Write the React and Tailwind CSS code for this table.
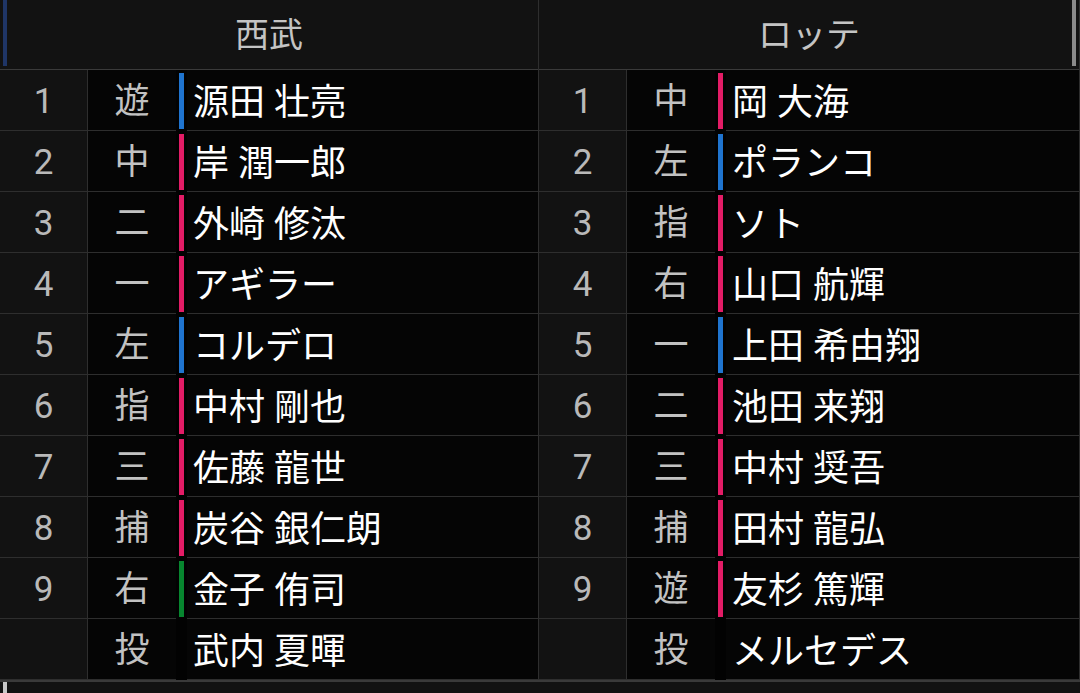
const seibu = [
  { no: "1", pos: "遊", name: "源田 壮亮", bar: "blue" },
  { no: "2", pos: "中", name: "岸 潤一郎", bar: "pink" },
  { no: "3", pos: "二", name: "外崎 修汰", bar: "pink" },
  { no: "4", pos: "一", name: "アギラー", bar: "pink" },
  { no: "5", pos: "左", name: "コルデロ", bar: "blue" },
  { no: "6", pos: "指", name: "中村 剛也", bar: "pink" },
  { no: "7", pos: "三", name: "佐藤 龍世", bar: "pink" },
  { no: "8", pos: "捕", name: "炭谷 銀仁朗", bar: "pink" },
  { no: "9", pos: "右", name: "金子 侑司", bar: "green" },
  { no: "", pos: "投", name: "武内 夏暉", bar: null },
]

const lotte = [
  { no: "1", pos: "中", name: "岡 大海", bar: "pink" },
  { no: "2", pos: "左", name: "ポランコ", bar: "blue" },
  { no: "3", pos: "指", name: "ソト", bar: "pink" },
  { no: "4", pos: "右", name: "山口 航輝", bar: "pink" },
  { no: "5", pos: "一", name: "上田 希由翔", bar: "blue" },
  { no: "6", pos: "二", name: "池田 来翔", bar: "pink" },
  { no: "7", pos: "三", name: "中村 奨吾", bar: "pink" },
  { no: "8", pos: "捕", name: "田村 龍弘", bar: "pink" },
  { no: "9", pos: "遊", name: "友杉 篤輝", bar: "pink" },
  { no: "", pos: "投", name: "メルセデス", bar: null },
]

const barColor = {
  blue: "bg-[#1f74cf]",
  pink: "bg-[#e31c66]",
  green: "bg-[#07862f]",
}

const Lineup = ({ team, players, className }) => (
  <div className={`flex flex-col border-r border-[#2e2e2e] ${className}`}>
    <div className="h-[70px] border-b border-[#3a3a3a] bg-[#121212] flex items-center justify-center pt-[2px] text-[34px] text-[#c4c4c4]">
      {team}
    </div>
    {players.map((p, i) => (
      <div key={i} className="flex h-[61px]">
        <div className="w-[88px] shrink-0 bg-[#121212] border-r border-b border-[#2e2e2e] flex items-center justify-center pt-[5px] text-[35px] text-[#b9b9b9]">
          {p.no}
        </div>
        <div className="w-[88px] shrink-0 bg-[#050505] border-b border-[#2e2e2e] flex items-center justify-center pt-[5px] text-[35px] text-[#c2c2c2]">
          {p.pos}
        </div>
        <div className="w-[11px] shrink-0 bg-[#020202] pl-[3px] pt-[3px] pb-[2px]">
          {p.bar && <div className={`w-[5px] h-full ${barColor[p.bar]}`} />}
        </div>
        <div className="flex-1 bg-[#050505] border-b border-[#2e2e2e] flex items-center pl-[6px] pt-[5px] text-[36px] text-white whitespace-nowrap">
          {p.name}
        </div>
      </div>
    ))}
  </div>
)

export default function App() {
  return (
    <div
      className="relative w-[1080px] h-[693px] overflow-hidden bg-[#050505] flex flex-col"
      style={{ fontFamily: "Roboto, 'Noto Sans CJK JP', sans-serif" }}
    >
      <div className="flex">
        <Lineup team="西武" players={seibu} className="w-[539px]" />
        <Lineup team="ロッテ" players={lotte} className="flex-1" />
      </div>
      <div className="flex-1 border-t-2 border-[#3a3a3a] bg-[#121212]">
        <div className="ml-[3px] w-[4px] h-full bg-[#c8c8c8]" />
      </div>

      {/* scroll indicators over the header */}
      <div className="absolute left-[3px] top-0 w-[4px] h-[66px] bg-[#1f3566]" />
      <div className="absolute left-[1072px] top-0 w-[4px] h-[66px] bg-[#8a8a8a]" />
    </div>
  )
}
